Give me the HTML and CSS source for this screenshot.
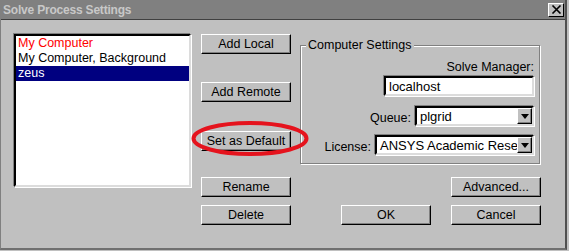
FILE: index.html
```html
<!DOCTYPE html>
<html>
<head>
<meta charset="utf-8" />
<title>Solve Process Settings</title>
<link rel="stylesheet" href="styles.css">
</head>
<body>
<div class="window">
  <div class="titlebar">
    <span class="title">Solve Process Settings</span>
    <span class="close">
      <svg width="11" height="9" viewBox="0 0 11 9"><path d="M1.5 0.5 L9.5 8.5 M9.5 0.5 L1.5 8.5" stroke="#000" stroke-width="1.6" fill="none"/></svg>
    </span>
  </div>
  <div class="main">
    <ul class="list">
      <li class="local">My Computer</li>
      <li>My Computer, Background</li>
      <li class="selected">zeus</li>
    </ul>

    <div class="actions">
      <button class="btn">Add Local</button>
      <button class="btn">Add Remote</button>
      <span class="marked">
        <button class="btn">Set as Default</button>
        <svg class="ring" width="119" height="36" viewBox="0 0 119 36"><ellipse cx="59" cy="17.5" rx="56.5" ry="15.5" fill="none" stroke="#e5131d" stroke-width="4"/></svg>
      </span>
    </div>

    <fieldset class="settings">
      <legend>Computer Settings</legend>
      <label class="caption" for="manager">Solve Manager:</label>
      <input class="field" id="manager" type="text" value="localhost" />
      <div class="row queue">
        <label>Queue:</label>
        <div class="combo"><span class="value">plgrid</span><span class="arrow"></span></div>
      </div>
      <div class="row license">
        <label>License:</label>
        <div class="combo"><span class="value">ANSYS Academic Rese</span><span class="arrow"></span></div>
      </div>
    </fieldset>

    <button class="btn rename">Rename</button>
    <button class="btn advanced">Advanced...</button>
    <button class="btn delete">Delete</button>
    <div class="dialog-buttons">
      <button class="btn">OK</button>
      <button class="btn">Cancel</button>
    </div>
  </div>
</div>
</body>
</html>
```

FILE: styles.css
```css
* {
  font-family: 'Liberation Sans', Arial, sans-serif;
  box-sizing: border-box;
}
body {
  margin: 0;
  background-color: #c0c0c0;
}
.window {
  width: 567px;
  height: 250px;
  background-color: #c0c0c0;
  border-left: 1px solid #808080;
  border-right: 2px solid #505050;
  border-bottom: 2px solid #707070;
}
.titlebar {
  height: 20px;
  background-color: #808080;
  border-bottom: 1px solid #404040;
  display: flex;
  align-items: center;
  justify-content: space-between;
  padding: 0 1px 0 2px;
}
.title {
  color: #c8c8c8;
  font-weight: bold;
  font-size: 12px;
  letter-spacing: -0.2px;
}
.close {
  width: 16px;
  height: 14px;
  background-color: #c0c0c0;
  border: 1px solid;
  border-color: #fff #000 #000 #fff;
  display: flex;
  align-items: center;
  justify-content: center;
}
.close svg {
  display: block;
}
.main {
  display: grid;
  grid-template-columns: 187px 99px 241px;
  grid-template-rows: 143px 28px 20px;
  padding: 14px 0 0 13px;
  font-size: 12.5px;
}
.list {
  grid-row: 1 / 3;
  width: 177px;
  height: 153px;
  margin: 0;
  padding: 0;
  list-style: none;
  background-color: #fff;
  border: 2px solid;
  border-color: #000 #dcdcdc #dcdcdc #000;
  box-shadow: -1px -1px 0 #808080, 1px 1px 0 #fff;
}
.list li {
  height: 15px;
  line-height: 15px;
  padding-left: 2px;
  white-space: nowrap;
}
.list .local {
  color: #f00;
}
.list .selected {
  background-color: #000080;
  color: #fff;
}
.btn {
  display: block;
  width: 90px;
  height: 20px;
  padding: 0;
  margin: 0;
  background-color: #c0c0c0;
  border: 1px solid;
  border-color: #fff #000 #000 #fff;
  box-shadow: inset -1px -1px 0 #808080;
  font-size: 12.5px;
  color: #000;
  text-align: center;
}
.actions {
  display: flex;
  flex-direction: column;
  align-items: flex-start;
}
.actions > * + * {
  margin-top: 28px;
}
.actions > .marked {
  margin-top: 29px;
}
.marked {
  position: relative;
}
.ring {
  position: absolute;
  left: -10px;
  top: -10px;
  pointer-events: none;
}
.settings {
  width: 240px;
  margin: 4px 0 0;
  padding: 7px 5px 8px;
  border: 1px solid #808080;
  box-shadow: inset 1px 1px 0 #fff, 1px 1px 0 #fff;
  display: flex;
  flex-direction: column;
  align-items: flex-end;
  align-self: start;
}
.settings legend {
  margin-left: 0;
  padding: 0 2px;
  line-height: 15px;
  background-color: #c0c0c0;
  font-size: 12.5px;
}
.caption {
  line-height: 15px;
  margin-right: 0;
}
.field {
  width: 150px;
  height: 20px;
  margin: 1px 0 0;
  padding: 0 3px;
  border: 2px solid;
  border-color: #000 #dcdcdc #dcdcdc #000;
  box-shadow: -1px -1px 0 #808080, 1px 1px 0 #fff;
  background-color: #fff;
  font-size: 13px;
  outline: none;
}
.row {
  display: flex;
  align-items: center;
}
.row label {
  margin-right: 4px;
  padding-top: 4px;
}
.queue {
  margin-top: 10px;
}
.queue .combo {
  width: 119px;
}
.license {
  margin-top: 9px;
}
.license .combo {
  width: 159px;
}
.combo {
  height: 20px;
  display: flex;
  align-items: center;
  background-color: #fff;
  border: 2px solid;
  border-color: #000 #dcdcdc #dcdcdc #000;
  box-shadow: -1px -1px 0 #808080, 1px 1px 0 #fff;
  overflow: hidden;
}
.combo .value {
  flex: 1;
  padding-left: 3px;
  overflow: hidden;
  white-space: nowrap;
  font-size: 13px;
}
.arrow {
  width: 15px;
  height: 16px;
  flex-shrink: 0;
  background-color: #c0c0c0;
  border: 1px solid;
  border-color: #fff #000 #000 #fff;
  box-shadow: inset -1px -1px 0 #808080;
  display: flex;
  align-items: center;
  justify-content: center;
}
.arrow::after {
  content: '';
  border-left: 4px solid transparent;
  border-right: 4px solid transparent;
  border-top: 5px solid #000;
}
.rename {
  grid-column: 2;
  grid-row: 2;
  align-self: start;
}
.delete {
  grid-column: 2;
  grid-row: 3;
}
.advanced {
  grid-column: 3;
  grid-row: 2;
  align-self: start;
  justify-self: end;
}
.dialog-buttons {
  grid-column: 3;
  grid-row: 3;
  display: flex;
  justify-content: flex-end;
  gap: 20px;
}
```
